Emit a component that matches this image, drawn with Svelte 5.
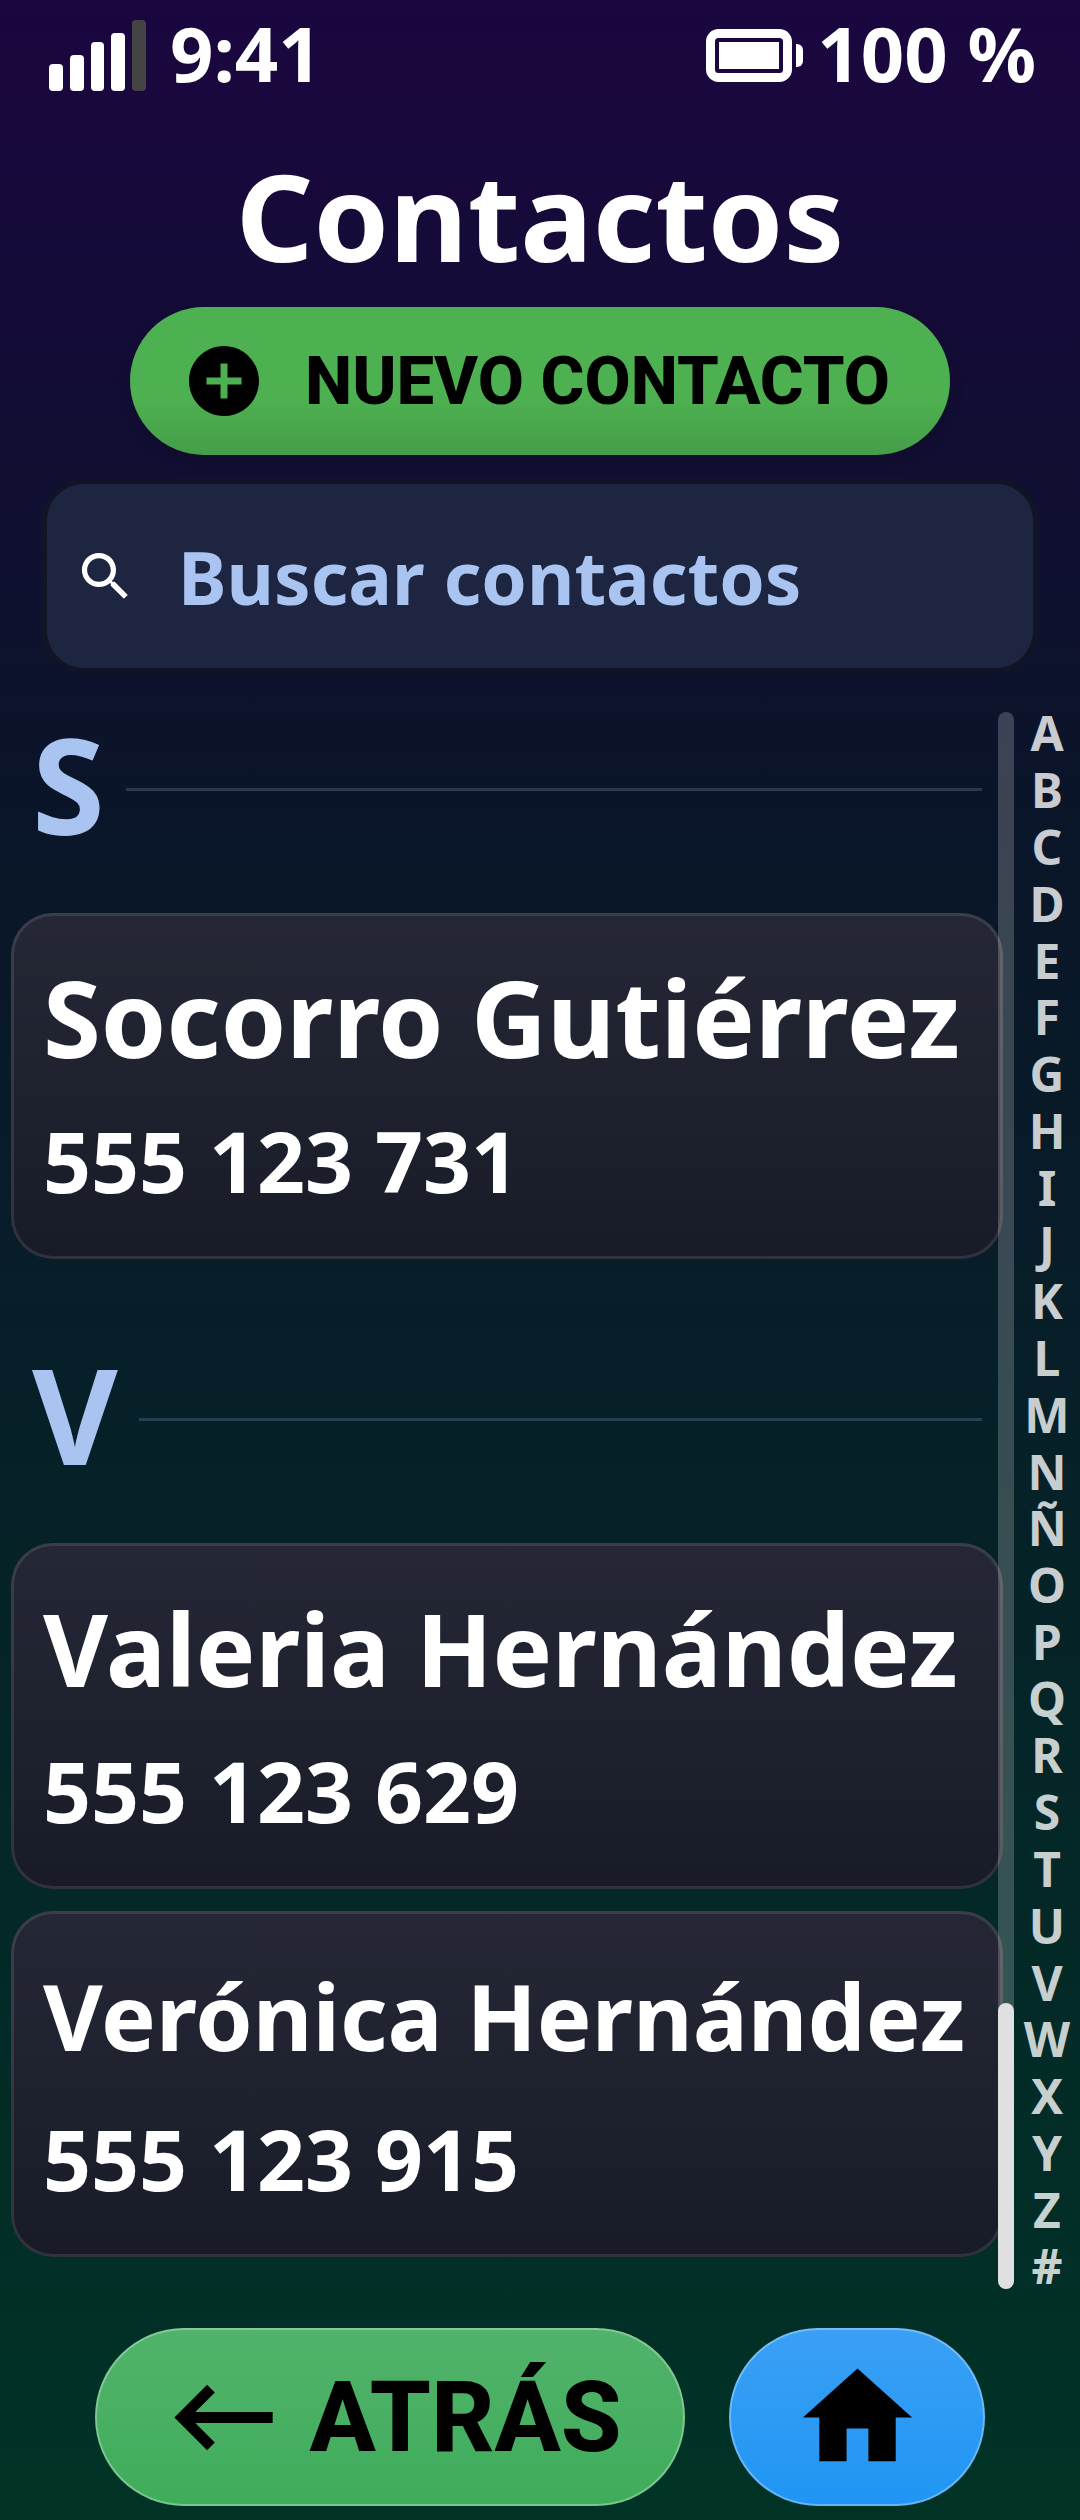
<script>
  const sections = [
    {
      letter: "S",
      contacts: [{ name: "Socorro Gutiérrez", phone: "555 123 731", size: "large" }]
    },
    {
      letter: "V",
      contacts: [
        { name: "Valeria Hernández", phone: "555 123 629", size: "medium" },
        { name: "Verónica Hernández", phone: "555 123 915", size: "small" }
      ]
    }
  ];

  const alphabet = [..."ABCDEFGHIJKLMNÑOPQRSTUVWXYZ#"];

  let query = "";

  $: visible = sections
    .map(section => ({
      ...section,
      contacts: section.contacts.filter(c =>
        c.name.toLowerCase().includes(query.toLowerCase())
      )
    }))
    .filter(section => section.contacts.length > 0);
</script>

<div class="phone">
  <div class="status">
    <div class="status__group status__group--left">
      <svg width="97" height="76" viewBox="0 0 97 76" aria-hidden="true">
        <g fill="#fff">
          <rect x="0" y="49" width="14" height="27" rx="4" />
          <rect x="21" y="40" width="14" height="36" rx="4" />
          <rect x="42" y="27" width="13" height="49" rx="4" />
          <rect x="62" y="18" width="14" height="58" rx="4" />
        </g>
        <rect x="83" y="5" width="14" height="71" rx="4" fill="#444" />
      </svg>
      <span>9:41</span>
    </div>
    <div class="status__group status__group--right">
      <svg width="97" height="58" viewBox="0 0 97 58" aria-hidden="true">
        <rect x="4.5" y="9.5" width="77" height="44" rx="8" fill="none" stroke="#fff" stroke-width="9" />
        <rect x="13" y="18" width="60" height="27" fill="#fff" />
        <path d="M90 20h1a6 6 0 0 1 6 6v11a6 6 0 0 1-6 6h-1z" fill="#fff" />
      </svg>
      <span>100 %</span>
    </div>
  </div>

  <h1>Contactos</h1>

  <button class="new">
    <svg width="84" height="84" viewBox="0 0 24 24" aria-hidden="true">
      <path d="M12 2C6.48 2 2 6.48 2 12s4.48 10 10 10 10-4.48 10-10S17.52 2 12 2zm5 11h-4v4h-2v-4H7v-2h4V7h2v4h4v2z" />
    </svg>
    NUEVO CONTACTO
  </button>

  <label class="search">
    <svg width="63" height="63" viewBox="0 0 24 24" aria-hidden="true">
      <path
        fill="#fff"
        d="M15.5 14h-.79l-.28-.27A6.471 6.471 0 0 0 16 9.5 6.5 6.5 0 1 0 9.5 16c1.61 0 3.09-.59 4.23-1.57l.27.28v.79l5 4.99L20.49 19l-4.99-5zm-6 0C7.01 14 5 11.99 5 9.5S7.01 5 9.5 5 14 7.01 14 9.5 11.99 14 9.5 14z" />
    </svg>
    <input
      type="text"
      placeholder="Buscar contactos"
      aria-label="Buscar contactos"
      bind:value={query} />
  </label>

  <main>
    <div class="list">
      {#each visible as section}
        <section id={section.letter}>
          <div class="heading">
            <h2>{section.letter}</h2>
            <div class="heading__rule"></div>
          </div>
          <div class="cards">
            {#each section.contacts as contact}
              <button class="card">
                <span class="card__name card__name--{contact.size}">{contact.name}</span>
                <span class="card__phone">{contact.phone}</span>
              </button>
            {/each}
          </div>
        </section>
      {/each}
    </div>

    <div class="scrollbar">
      <div class="scrollbar__thumb"></div>
    </div>

    <nav class="index">
      {#each alphabet as letter}
        <a href={`#${letter}`}>{letter}</a>
      {/each}
    </nav>
  </main>

  <footer>
    <button class="back">
      <svg width="131" height="131" viewBox="0 0 24 24" aria-hidden="true">
        <path d="M21 11H6.83l3.58-3.59L9 6l-6 6 6 6 1.41-1.41L6.83 13H21z" />
      </svg>
      ATRÁS
    </button>
    <button class="home" aria-label="Inicio">
      <svg width="131" height="131" viewBox="0 0 24 24" aria-hidden="true">
        <path d="M10 20v-6h4v6h5v-8h3L12 3 2 12h3v8z" />
      </svg>
    </button>
  </footer>
</div>

<style>
  :global(body) {
    background: #003326;
  }
  .phone {
    box-sizing: border-box;
    display: flex;
    flex-direction: column;
    min-height: 100vh;
    padding-bottom: 14px;
    background: linear-gradient(180deg, #1b0640 0%, #0a1529 32%, #003326 100%);
    color: #fff;
    font-family: "Noto Sans", sans-serif;
    font-weight: 700;
  }
  svg {
    flex: none;
    display: block;
  }
  button {
    border: 0;
    padding: 0;
    font: inherit;
    cursor: pointer;
  }

  .status {
    display: flex;
    justify-content: space-between;
    padding: 0 44px 0 49px;
    font-size: 76px;
    line-height: 106px;
  }
  .status__group {
    display: flex;
    align-items: center;
  }
  .status__group--left {
    gap: 24px;
  }
  .status__group--right {
    gap: 14px;
  }

  h1 {
    margin: 39px 0 22px;
    font-size: 121px;
    line-height: 140px;
    text-align: center;
  }

  .new {
    display: flex;
    align-items: center;
    justify-content: center;
    align-self: center;
    gap: 39px;
    box-sizing: border-box;
    min-width: 820px;
    height: 148px;
    padding-right: 8px;
    border-radius: 74px;
    background: linear-gradient(180deg, #4eb151 0%, #4eb151 60%, #449e48 100%);
    box-shadow: 0 8px 16px rgba(0, 0, 0, 0.15);
    color: #000;
    font-family: Roboto, sans-serif;
    font-size: 67px;
    font-weight: 800;
  }

  .search {
    display: flex;
    align-items: center;
    gap: 41px;
    margin: 24px 42px 0;
    height: 184px;
    padding: 0 27px;
    border: 5px solid #111424;
    border-radius: 42px;
    background: #1e2540;
  }
  .search input {
    flex: 1;
    min-width: 0;
    padding: 0;
    border: 0;
    outline: 0;
    background: none;
    color: #fff;
    font: inherit;
    font-size: 73px;
  }
  .search input::placeholder {
    color: #a9c4f1;
    opacity: 1;
  }

  main {
    display: flex;
    flex: 1;
    margin-top: 32px;
  }
  .list {
    flex: 1;
    display: flex;
    flex-direction: column;
    gap: 89px;
    min-width: 0;
    padding: 13px 0 38px 11px;
  }
  .heading {
    display: flex;
    align-items: center;
    gap: 21px;
    padding: 0 21px;
  }
  h2 {
    margin: 0;
    color: #a9c4f1;
    font-size: 132px;
    line-height: 132px;
  }
  .heading__rule {
    flex: 1;
    height: 3px;
    margin-top: 10px;
    background: rgba(169, 196, 241, 0.2);
  }
  .cards {
    display: flex;
    flex-direction: column;
    gap: 22px;
    margin-top: 63px;
  }
  .card {
    display: flex;
    flex-direction: column;
    gap: 16px;
    padding: 32px 29px 38px;
    border: 3px solid rgba(255, 255, 255, 0.1);
    border-radius: 42px;
    background: linear-gradient(180deg, #252736, #181b27) border-box;
    color: #fff;
    text-align: left;
    white-space: nowrap;
  }
  .card__name {
    line-height: 140px;
  }
  .card__name--large {
    font-size: 105px;
  }
  .card__name--medium {
    font-size: 100px;
  }
  .card__name--small {
    font-size: 92px;
  }
  .card__phone {
    font-size: 84px;
    line-height: 114px;
  }

  /* the bar rides over the right edge of the cards */
  .scrollbar {
    position: relative;
    display: flex;
    flex-direction: column;
    justify-content: flex-end;
    width: 16px;
    margin: 7px 0 6px -5px;
    border-radius: 8px;
    background: rgba(255, 255, 255, 0.2);
  }
  .scrollbar__thumb {
    height: 286px;
    border-radius: 8px;
    background: #e0e0e0;
  }

  .index {
    display: flex;
    flex-direction: column;
    width: 66px;
  }
  .index a {
    flex: 1;
    display: flex;
    align-items: center;
    justify-content: center;
    color: rgba(255, 255, 255, 0.78);
    font-size: 48px;
    line-height: 48px;
    text-decoration: none;
  }

  footer {
    display: flex;
    justify-content: center;
    gap: 44px;
    margin-top: 33px;
  }
  footer button {
    display: flex;
    align-items: center;
    justify-content: center;
    gap: 20px;
    box-sizing: border-box;
    height: 178px;
    border: 2px solid rgba(255, 255, 255, 0.3);
    border-radius: 89px;
    color: #000;
  }
  .back {
    width: 590px;
    background: linear-gradient(180deg, #51b36b, #3fac5b) border-box;
    font-family: Roboto, sans-serif;
    font-size: 98px;
    font-weight: 800;
  }
  .home {
    width: 256px;
    background: linear-gradient(180deg, #3aa0f5, #2095f3) border-box;
  }
</style>
